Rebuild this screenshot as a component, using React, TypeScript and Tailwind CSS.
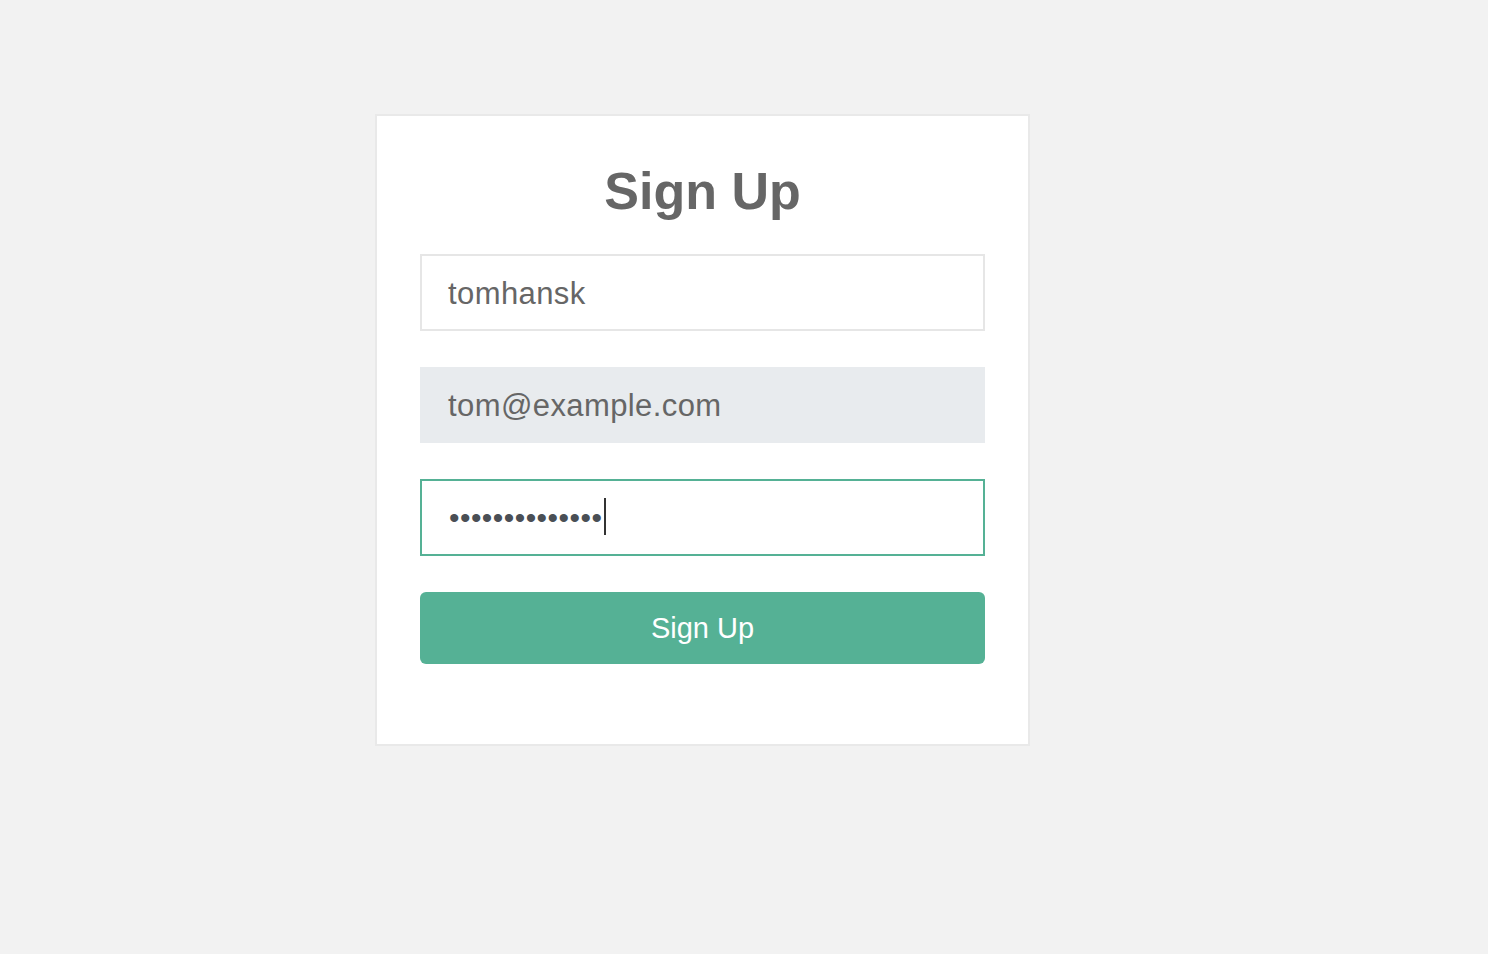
import React from "react";

export default function App() {
  return (
    <div
      className="min-h-[954px] w-full bg-[#f2f2f2] pt-[114px] pl-[375px]"
      style={{ fontFamily: '"Liberation Sans", Arial, Helvetica, sans-serif' }}
    >
      <div className="w-[655px] border-2 border-[#e9e9e9] bg-white px-[43px] pt-[45px] pb-[80px]">
        <h1 className="text-center text-[52px] leading-[60px] font-bold text-[#666666]">Sign Up</h1>
        <div className="mt-[33px] flex flex-col gap-[36px]">
          <div className="flex h-[77px] items-center border-2 border-[#e6e6e6] bg-white pt-[3px] pl-[26px] text-[31px] tracking-[0.4px] text-[#666666]">
            tomhansk
          </div>
          <div className="flex h-[76px] items-center border-2 border-[#e8ebee] bg-[#e8ebee] pt-[3px] pl-[26px] text-[31px] tracking-[0.4px] text-[#666666]">
            tom@example.com
          </div>
          <div className="flex h-[77px] items-center border-2 border-[#55b195] bg-white pl-[27px] text-[#4a4f55]">
            <span className="text-[30px] leading-none tracking-[0.45px]">••••••••••••••</span>
            <span className="ml-[2px] -mt-[3px] h-[37px] w-[2px] bg-[#333]" />
          </div>
          <button className="h-[72px] rounded-[6px] bg-[#55b195] pt-[2px] text-[29px] text-white">Sign Up</button>
        </div>
      </div>
    </div>
  );
}
